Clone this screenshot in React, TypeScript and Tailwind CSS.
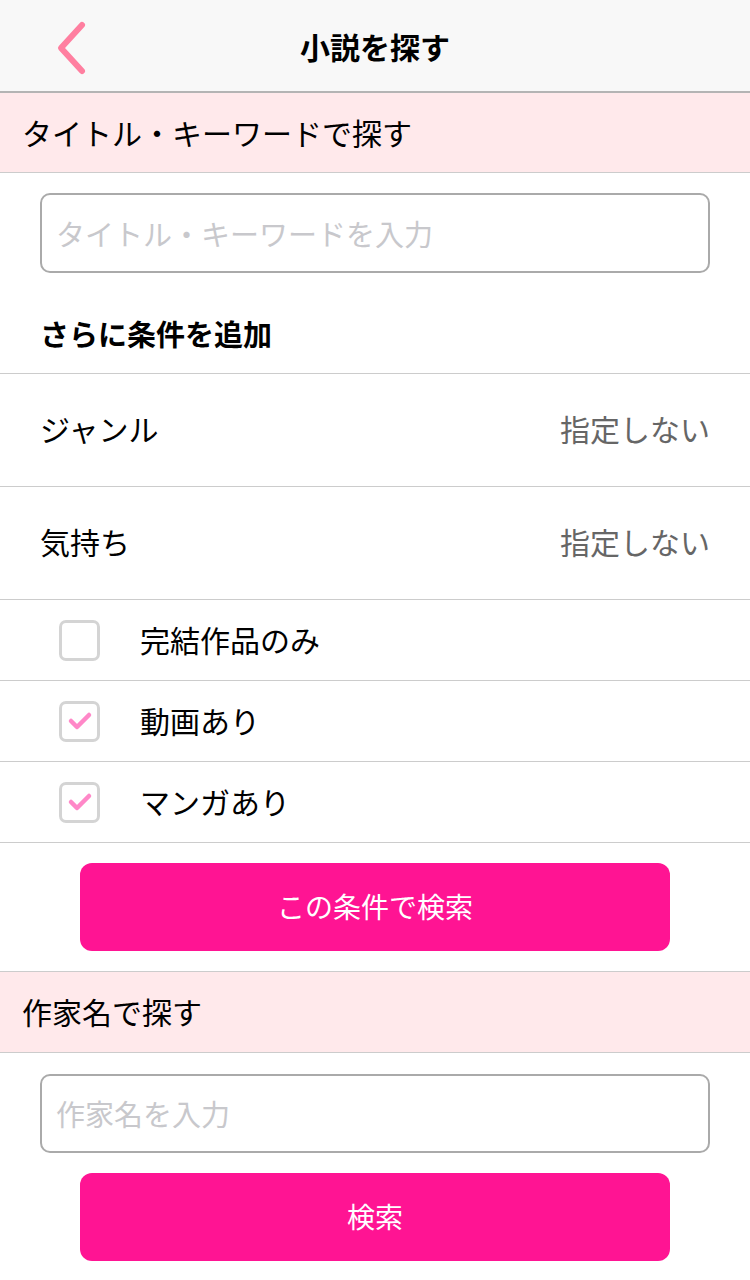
import React from "react";

const font = { fontFamily: '"Noto Sans CJK JP", "Noto Sans", sans-serif' };

function Checkbox({ checked }: { checked: boolean }) {
  return (
    <div className="w-[41px] h-[41px] rounded-[7px] border-[3px] border-[#d4d4d4] flex items-center justify-center bg-white">
      {checked && (
        <svg width="26" height="22" viewBox="0 0 26 22">
          <path d="M4 11 L10 17 L22 5" fill="none" stroke="#ff88c8" strokeWidth="4.5" strokeLinecap="round" strokeLinejoin="round" />
        </svg>
      )}
    </div>
  );
}

export default function App() {
  return (
    <div className="w-[750px] min-h-[1280px] bg-white text-black" style={font}>
      {/* Top bar */}
      <div className="relative h-[93px] bg-[#f8f8f8] border-b-2 border-[#b4b4b4] flex items-center justify-center">
        <svg className="absolute left-[52px] top-[20px]" width="38" height="56" viewBox="0 0 38 56">
          <path d="M30 5 L9 28 L30 51" fill="none" stroke="#ff7fa0" strokeWidth="6" strokeLinecap="round" strokeLinejoin="round" />
        </svg>
        <div className="text-[30px] font-bold leading-none">小説を探す</div>
      </div>

      {/* Section header */}
      <div className="h-[80px] bg-[#ffe9eb] border-b border-[#cccccc] flex items-center pl-[22px]">
        <span className="text-[30px] leading-none -mt-[2px]">タイトル・キーワードで探す</span>
      </div>

      <div className="px-[40px] pt-[20px]">
        <div className="h-[80px] border-2 border-[#aaaaaa] rounded-[10px] flex items-center pl-[14px]">
          <span className="text-[29px] text-[#c8c8cc] leading-none">タイトル・キーワードを入力</span>
        </div>
        <div className="h-[100px] pt-[20px] flex items-center">
          <span className="text-[29px] font-bold leading-none">さらに条件を追加</span>
        </div>
      </div>

      <div className="border-t border-[#cccccc]">
        <div className="h-[113px] flex items-center justify-between px-[40px] border-b border-[#cccccc]">
          <span className="text-[30px] leading-none -mt-[4px]">ジャンル</span>
          <span className="text-[30px] leading-none text-[#666666] -mt-[4px]">指定しない</span>
        </div>
        <div className="h-[113px] flex items-center justify-between px-[40px] border-b border-[#cccccc]">
          <span className="text-[30px] leading-none -mt-[4px]">気持ち</span>
          <span className="text-[30px] leading-none text-[#666666] -mt-[4px]">指定しない</span>
        </div>
        {[
          { label: "完結作品のみ", checked: false },
          { label: "動画あり", checked: true },
          { label: "マンガあり", checked: true },
        ].map((r) => (
          <div key={r.label} className="h-[81px] flex items-center pl-[59px] border-b border-[#cccccc]">
            <Checkbox checked={r.checked} />
            <span className="ml-[40px] text-[30px] leading-none -mt-[2px]">{r.label}</span>
          </div>
        ))}
      </div>

      <div className="px-[80px] pt-[20px] pb-[20px]">
        <div className="h-[88px] bg-[#ff1493] rounded-[12px] flex items-center justify-center">
          <span className="text-white text-[28px] leading-none -mt-[2px]">この条件で検索</span>
        </div>
      </div>

      <div className="h-[82px] bg-[#ffe9eb] border-y border-[#cccccc] flex items-center pl-[22px]">
        <span className="text-[30px] leading-none -mt-[2px]">作家名で探す</span>
      </div>

      <div className="px-[40px] pt-[21px]">
        <div className="h-[79px] border-2 border-[#aaaaaa] rounded-[10px] flex items-center pl-[14px]">
          <span className="text-[29px] text-[#c8c8cc] leading-none">作家名を入力</span>
        </div>
      </div>
      <div className="px-[80px] pt-[20px] pb-[20px]">
        <div className="h-[88px] bg-[#ff1493] rounded-[12px] flex items-center justify-center">
          <span className="text-white text-[28px] leading-none -mt-[2px]">検索</span>
        </div>
      </div>
    </div>
  );
}
